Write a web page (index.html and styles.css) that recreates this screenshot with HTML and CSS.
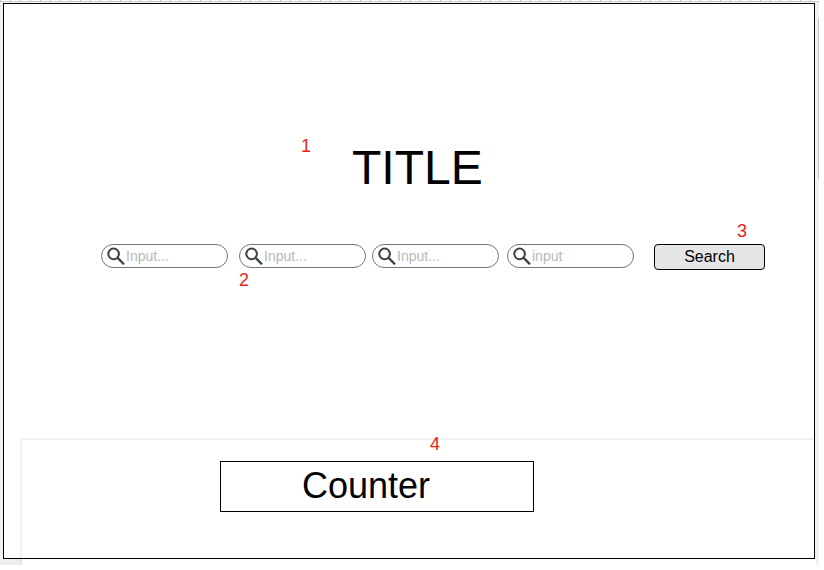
FILE: index.html
```
<!DOCTYPE html>
<html lang="en">
<head>
<meta charset="utf-8">
<title>Wireframe</title>
<link rel="stylesheet" href="styles.css">
</head>
<body>
<svg class="symbols" aria-hidden="true">
  <symbol id="lens" viewBox="0 0 18 18">
    <circle cx="6.6" cy="6.9" r="5.3" fill="none" stroke="#404040" stroke-width="2"/>
    <path d="M10.6 10.9L17 17.3" fill="none" stroke="#404040" stroke-width="2.3"/>
  </symbol>
</svg>
<div class="workspace">
  <div class="ruler"></div>
  <div class="scroll-track"><div class="scroll-thumb"></div></div>
  <main class="frame">
    <section class="hero">
      <h1 class="title">TITLE</h1>
      <div class="search">
        <div class="field"><svg class="icon"><use href="#lens"/></svg><span>Input...</span></div>
        <div class="field second"><svg class="icon"><use href="#lens"/></svg><span>Input...</span></div>
        <div class="field third"><svg class="icon"><use href="#lens"/></svg><span>Input...</span></div>
        <div class="field fourth"><svg class="icon"><use href="#lens"/></svg><span>input</span></div>
        <button class="submit" type="button">Search</button>
      </div>
    </section>
    <section class="page">
      <div class="counter">Counter</div>
    </section>
  </main>
  <div class="outside"></div>
  <span class="note note-1">1</span>
  <span class="note note-2">2</span>
  <span class="note note-3">3</span>
  <span class="note note-4">4</span>
</div>
</body>
</html>
```
FILE: styles.css
```
* { box-sizing: border-box; }
body {
  margin: 0;
  background: #fff;
  font-family: "Liberation Sans", Arial, sans-serif;
}
.symbols { display: none; }
.workspace {
  position: relative;
  width: 819px;
  height: 565px;
  overflow: hidden;
  background: #f0f0f0;
}
.ruler {
  height: 3px;
  background:
    linear-gradient(#c8c8c8, #c8c8c8) 0 1px / 100% 1px no-repeat,
    repeating-linear-gradient(90deg, #bbb 0 1px, #fff 1px 10px) 0 0 / 100% 1px no-repeat,
    #f4f4f4;
}
.scroll-track {
  position: absolute;
  top: 2px;
  right: 0;
  width: 3px;
  height: 563px;
  padding-top: 17px;
  background: #f0f0f0;
}
.scroll-thumb {
  width: 1px;
  height: 160px;
  margin-left: auto;
  background: #c1c1c1;
}
.frame {
  display: flex;
  flex-direction: column;
  width: 812px;
  height: 556px;
  margin-left: 3px;
  border: 1px solid #000;
  background: #fff;
}
.hero { height: 434px; padding-top: 136px; }
.title {
  margin: 0 0 0 348px;
  font-size: 48px;
  font-weight: 400;
  line-height: 55px;
}
.search {
  display: flex;
  align-items: flex-start;
  margin: 49px 0 0 97px;
}
.field {
  display: flex;
  align-items: center;
  width: 127px;
  height: 24px;
  padding-left: 5px;
  border: 1px solid #757575;
  border-radius: 12px;
  color: #b8b8b8;
  font-size: 14px;
  line-height: 16px;
}
.second { margin-left: 11px; }
.third { margin-left: 6px; }
.fourth { margin-left: 8px; }
.icon {
  flex: none;
  width: 18px;
  height: 18px;
  margin-right: 1px;
}
.submit {
  width: 111px;
  height: 26px;
  margin-left: 20px;
  padding: 0;
  border: 1px solid #000;
  border-radius: 4px;
  background: #e6e6e6;
  color: #000;
  font: 16px/22px "Liberation Sans", Arial, sans-serif;
}
.page {
  flex: 1;
  margin-left: 16px;
  padding: 21px 0 0 198px;
  border: solid #f1f1f1;
  border-width: 2px 0 0 2px;
}
.counter {
  width: 314px;
  height: 51px;
  padding-left: 81px;
  border: 1px solid #000;
  font-size: 36px;
  line-height: 48px;
}
.outside {
  width: 816px;
  height: 6px;
  background: linear-gradient(90deg, #ededed 20px, #ddd 20px 21px, #ebebeb 21px 22px, #fff 22px);
}
.note {
  position: absolute;
  color: #e8241c;
  font-size: 18px;
  line-height: 20px;
}
.note-1 { left: 301px; top: 136px; }
.note-2 { left: 239px; top: 270px; }
.note-3 { left: 737px; top: 221px; }
.note-4 { left: 430px; top: 434px; }
```
